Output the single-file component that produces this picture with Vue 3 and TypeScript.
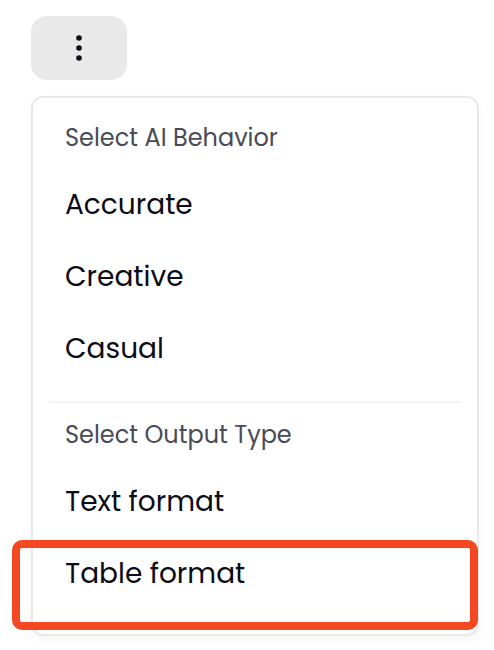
<script setup lang="ts">
interface Option {
  id: string
  label: string
}
interface Group {
  id: string
  title: string
  options: Option[]
}

const groups: Group[] = [
  {
    id: 'behavior',
    title: 'Select AI Behavior',
    options: [
      { id: 'accurate', label: 'Accurate' },
      { id: 'creative', label: 'Creative' },
      { id: 'casual', label: 'Casual' },
    ],
  },
  {
    id: 'output',
    title: 'Select Output Type',
    options: [
      { id: 'text', label: 'Text format' },
      { id: 'table', label: 'Table format' },
    ],
  },
]
</script>

<template>
  <main class="page">
    <button class="trigger" type="button" aria-label="Options">
      <svg width="8" height="28" viewBox="0 0 8 28" fill="#0b0c15">
        <circle cx="4" cy="4" r="2.8" />
        <circle cx="4" cy="14" r="2.8" />
        <circle cx="4" cy="24" r="2.8" />
      </svg>
    </button>
    <div class="menu">
      <section v-for="group in groups" :key="group.id" class="group">
        <h2 class="title">{{ group.title }}</h2>
        <div v-for="option in group.options" :key="option.id" class="option">
          {{ option.label }}
        </div>
      </section>
      <div class="highlight"></div>
    </div>
  </main>
</template>

<style>
body {
  background: #fff;
  overflow: hidden;
}
</style>

<style scoped>
.page {
  box-sizing: border-box;
  height: 650px;
  padding: 16px 15px 0 31px;
  overflow: hidden;
  font-family: Poppins, Inter, sans-serif;
}
.trigger {
  display: flex;
  align-items: center;
  justify-content: center;
  width: 96px;
  height: 64px;
  padding: 0;
  border: 0;
  border-radius: 16px;
  background: #e9e9e9;
}
.menu {
  position: relative;
  box-sizing: border-box;
  height: 540px;
  margin-top: 16px;
  padding: 8px 16px 0;
  border: 2px solid #e9e9e9;
  border-radius: 12px;
  box-shadow: 0 4px 10px rgba(0, 0, 0, 0.04);
}
.group + .group {
  margin-top: 16px;
  border-top: 2px solid #f2f2f2;
}
.title {
  box-sizing: border-box;
  height: 63px;
  margin: 0;
  padding: 14px 0 0 16px;
  font-size: 24px;
  font-weight: 400;
  line-height: 36px;
  color: #494b57;
}
.option {
  display: flex;
  align-items: center;
  height: 72px;
  padding-left: 16px;
  font-size: 28px;
  color: #0b0c15;
}
.highlight {
  position: absolute;
  box-sizing: border-box;
  left: -21px;
  top: 442px;
  width: 466px;
  height: 90px;
  border: 8px solid #f34822;
  border-radius: 10px;
}
</style>
